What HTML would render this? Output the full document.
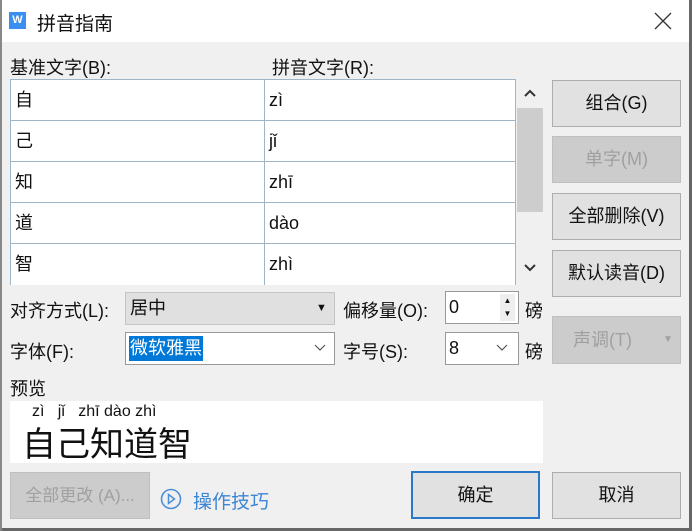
<!DOCTYPE html>
<html><head><meta charset="utf-8"><style>
*{margin:0;padding:0;box-sizing:border-box}
body{width:692px;height:531px;background:#f0f0f0;font-family:"Liberation Sans","Noto Sans CJK SC",sans-serif;font-size:18px;color:#111;position:relative;overflow:hidden}
.a{position:absolute;white-space:nowrap}
.btn{position:absolute;background:#e1e1e1;border:1px solid #adadad;text-align:center;font-size:18px}
.dis{background:#cccccc;border-color:#bfbfbf;color:#a0a0a0}
.cell{position:absolute;height:41px;line-height:40px;padding-left:4px;border-bottom:1px solid #9fb5c8;background:#fff}
</style></head><body>
<div class="a" style="left:0;top:0;width:692px;height:42px;background:#fff"></div>
<div class="a" style="left:9px;top:12px;width:17px;height:17px;background:#3b8ff0;color:#fff;font-size:11px;font-weight:bold;text-align:center;line-height:17px">W</div>
<div class="a" style="left:37px;top:9px;font-size:19px">拼音指南</div>
<svg class="a" style="left:654px;top:12px" width="18" height="18"><path d="M1 1L17 17M17 1L1 17" stroke="#333" stroke-width="1.3"/></svg>
<div class="a" style="left:689px;top:0;width:3px;height:531px;background:#666"></div>
<div class="a" style="left:0;top:528px;width:692px;height:3px;background:#666"></div>
<div class="a" style="left:0;top:0;width:2px;height:531px;background:#888"></div>

<div class="a" style="left:10px;top:54px">基准文字(B):</div>
<div class="a" style="left:272px;top:54px">拼音文字(R):</div>
<div class="a" style="left:10px;top:79px;width:506px;height:206px;border:1px solid #9fb5c8;background:#fff"></div>
<div class="a" style="left:264px;top:80px;width:1px;height:204px;background:#9fb5c8"></div>
<div class="cell" style="left:11px;top:80px;width:253px">自</div><div class="cell" style="left:265px;top:80px;width:250px">zì</div>
<div class="cell" style="left:11px;top:121px;width:253px">己</div><div class="cell" style="left:265px;top:121px;width:250px">jǐ</div>
<div class="cell" style="left:11px;top:162px;width:253px">知</div><div class="cell" style="left:265px;top:162px;width:250px">zhī</div>
<div class="cell" style="left:11px;top:203px;width:253px">道</div><div class="cell" style="left:265px;top:203px;width:250px">dào</div>
<div class="cell" style="left:11px;top:244px;width:253px;border:none">智</div><div class="cell" style="left:265px;top:244px;width:250px;border:none">zhì</div>
<svg class="a" style="left:523px;top:88px" width="14" height="10"><path d="M2 8L7 3L12 8" stroke="#333" stroke-width="2" fill="none"/></svg>
<div class="a" style="left:517px;top:108px;width:26px;height:104px;background:#cdcdcd"></div>
<svg class="a" style="left:523px;top:263px" width="14" height="10"><path d="M2 2L7 7L12 2" stroke="#333" stroke-width="2" fill="none"/></svg>

<div class="btn" style="left:552px;top:80px;width:129px;height:47px;line-height:45px">组合(G)</div>
<div class="btn dis" style="left:552px;top:136px;width:129px;height:47px;line-height:45px">单字(M)</div>
<div class="btn" style="left:552px;top:193px;width:129px;height:47px;line-height:45px">全部删除(V)</div>
<div class="btn" style="left:552px;top:250px;width:129px;height:47px;line-height:45px">默认读音(D)</div>
<div class="btn dis" style="left:552px;top:316px;width:129px;height:48px;line-height:46px;text-align:left;padding-left:20px">声调(T)<span style="position:absolute;left:110px;font-size:10px">▼</span></div>

<div class="a" style="left:10px;top:297px">对齐方式(L):</div>
<div class="a" style="left:125px;top:292px;width:210px;height:33px;background:#e0e0e0;border:1px solid #c4c4c4;line-height:31px;padding-left:4px">居中<span style="position:absolute;left:190px;font-size:11px">▼</span></div>
<div class="a" style="left:343px;top:297px">偏移量(O):</div>
<div class="a" style="left:445px;top:291px;width:74px;height:33px;background:#fff;border:1px solid #999;line-height:31px;padding-left:3px">0</div>
<div class="a" style="left:500px;top:294px;width:15px;height:27px;background:#eee;font-size:8px;line-height:13px;text-align:center">▲<br>▼</div>
<div class="a" style="left:525px;top:297px">磅</div>

<div class="a" style="left:10px;top:338px">字体(F):</div>
<div class="a" style="left:125px;top:332px;width:210px;height:33px;background:#fff;border:1px solid #999;padding:3px 3px"><span style="background:#0078d7;color:#fff;line-height:25px;display:inline-block;padding:0 1px">微软雅黑</span></div>
<svg class="a" style="left:314px;top:344px" width="12" height="8"><path d="M1 1L6 6L11 1" stroke="#555" stroke-width="1.2" fill="none"/></svg>
<div class="a" style="left:343px;top:338px">字号(S):</div>
<div class="a" style="left:445px;top:332px;width:74px;height:33px;background:#fff;border:1px solid #999;line-height:31px;padding-left:3px">8</div>
<svg class="a" style="left:496px;top:344px" width="12" height="8"><path d="M1 1L6 6L11 1" stroke="#555" stroke-width="1.2" fill="none"/></svg>
<div class="a" style="left:525px;top:338px">磅</div>

<div class="a" style="left:10px;top:375px">预览</div>
<div class="a" style="left:10px;top:401px;width:533px;height:62px;background:#fff"></div>
<div class="a" style="left:32px;top:403px;font-size:16px">zì&nbsp;&nbsp;&nbsp;jǐ&nbsp;&nbsp;&nbsp;zhī dào zhì</div>
<div class="a" style="left:22px;top:425px;font-size:34px;line-height:40px">自己知道智</div>

<div class="btn dis" style="left:10px;top:472px;width:140px;height:47px;line-height:45px;font-size:17px">全部更改 (A)...</div>
<svg class="a" style="left:160px;top:488px" width="22" height="22"><circle cx="11" cy="11" r="9.5" stroke="#4a8fd8" stroke-width="1.6" fill="none"/><path d="M8.5 6.5L14.5 11L8.5 15.5Z" stroke="#4a8fd8" stroke-width="1.5" fill="none"/></svg>
<div class="a" style="left:193px;top:487px;color:#3d86d6;font-size:19px">操作技巧</div>
<div class="btn" style="left:411px;top:471px;width:129px;height:48px;line-height:44px;border:2px solid #2a78c8">确定</div>
<div class="btn" style="left:552px;top:472px;width:129px;height:47px;line-height:45px">取消</div>
</body></html>
